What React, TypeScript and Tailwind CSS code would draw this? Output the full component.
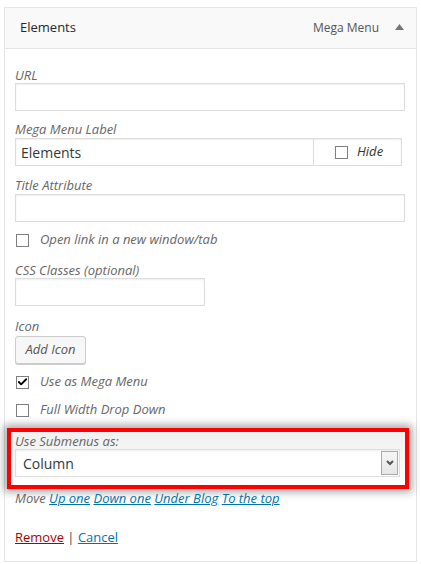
import { Check } from "lucide-react";

const font = { fontFamily: '"Open Sans", "Noto Sans", sans-serif' };

function Box({ checked = false }: { checked?: boolean }) {
  return (
    <span className="flex items-center justify-center w-[13px] h-[13px] border border-[#7e7e7e] bg-white shrink-0">
      {checked && <Check size={12} strokeWidth={4} className="text-black" />}
    </span>
  );
}

function Label({ children, className = "" }: { children: React.ReactNode; className?: string }) {
  return <div className={"h-4 leading-4 text-[13px] italic text-[#666] " + className}>{children}</div>;
}

const inputCls =
  "h-[28px] border border-[#ddd] bg-white shadow-[inset_0_1px_2px_rgba(0,0,0,0.07)]";

export default function App() {
  return (
    <div className="w-[421px] h-[564px] bg-white pt-[7px] pl-[4px] pr-[4px]" style={font}>
      <div className="border border-[#e5e5e5] bg-white">
        {/* Header */}
        <div className="h-[41px] bg-[#f9f9f9] border-b border-[#e5e5e5] flex items-center pl-[15px] pr-[12px]">
          <span className="text-[13px] text-[#23282d]">Elements</span>
          <span className="ml-auto text-[12px] text-[#555]">Mega Menu</span>
          <svg width="9" height="6" viewBox="0 0 9 6" className="ml-[16px] mb-[2px]">
            <path d="M0 6 L4.5 0 L9 6 Z" fill="#72777c" />
          </svg>
        </div>

        {/* Body */}
        <div className="pt-[18px] pb-[16px] pl-[10px] pr-[11px]">
          <Label>URL</Label>
          <div className={inputCls} />

          <Label className="mt-[10px]">Mega Menu Label</Label>
          <div className={"mt-px mr-[3px] flex " + inputCls}>
            <div className="flex-1 flex items-center pl-[5px] text-[14px] text-[#32373c]">Elements</div>
            <div className="w-[88px] border-l border-[#ddd] flex items-center pl-[21px] gap-[9px]">
              <Box />
              <span className="text-[13px] italic text-[#333]">Hide</span>
            </div>
          </div>

          <Label className="mt-[11px]">Title Attribute</Label>
          <div className={"mt-px " + inputCls} />

          <div className="mt-[9px] h-[18px] flex items-center gap-[11px] pl-px">
            <Box />
            <span className="text-[13px] italic text-[#666]">Open link in a new window/tab</span>
          </div>

          <Label className="mt-[13px]">CSS Classes (optional)</Label>
          <div className={"w-[190px] " + inputCls} />

          <Label className="mt-[12px]">Icon</Label>
          <button className="mt-[2px] h-[28px] w-[71px] rounded-[3px] border border-[#ccc] bg-[#f7f7f7] shadow-[0_1px_0_#ccc] text-[13px] italic text-[#555]">
            Add Icon
          </button>

          <div className="mt-[9px] h-[18px] flex items-center gap-[11px] pl-px">
            <Box checked />
            <span className="text-[13px] italic text-[#666]">Use as Mega Menu</span>
          </div>

          <div className="mt-[10px] h-[18px] flex items-center gap-[11px] pl-px">
            <Box />
            <span className="text-[13px] italic text-[#666]">Full Width Drop Down</span>
          </div>

          {/* Highlighted field */}
          <div className="mt-[9px] -ml-[8px] -mr-[4px] border-4 border-[#ff0000] bg-gradient-to-b from-[#f0f0f0] to-white shadow-[0_0_8px_3px_rgba(0,0,0,0.35)] pt-px pb-[8px] pl-[4px] pr-[5px]">
            <Label>Use Submenus as:</Label>
            <div className={"flex " + inputCls}>
              <div className="flex-1 flex items-center pl-[7px] text-[14px] text-[#32373c]">Column</div>
              <div className="w-[17px] mr-px my-px border border-[#aaa] bg-gradient-to-b from-[#f6f6f6] to-[#e6e6e6] flex items-center justify-center">
                <svg width="8" height="6" viewBox="0 0 8 6">
                  <path d="M1 1 L4 4 L7 1" fill="none" stroke="#555" strokeWidth="2" />
                </svg>
              </div>
            </div>
          </div>

          <div className="mt-px h-4 leading-4 text-[13px] italic text-[#666]">
            Move{" "}
            <a className="text-[#0073aa] underline">Up one</a>{" "}
            <a className="text-[#0073aa] underline">Down one</a>{" "}
            <a className="text-[#0073aa] underline">Under Blog</a>{" "}
            <a className="text-[#0073aa] underline">To the top</a>
          </div>

          <div className="mt-[23px] h-4 leading-4 text-[13px] text-[#444]">
            <a className="text-[#a00] underline">Remove</a> |{" "}
            <a className="text-[#0073aa] underline">Cancel</a>
          </div>
        </div>
      </div>
    </div>
  );
}
